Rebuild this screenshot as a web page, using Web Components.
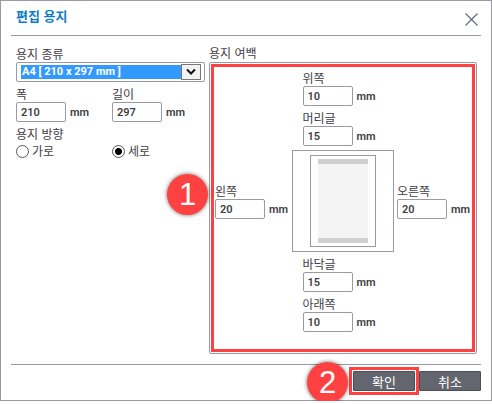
<!DOCTYPE html>
<html lang="ko">
<head>
<meta charset="utf-8">
<title>편집 용지</title>
<style>
  body { margin: 0; background: #fff; color: #404044; font: 12px "Liberation Sans", "Noto Sans CJK KR", sans-serif;
    --line: #9a9aa6; --red: #ff4141; --label: "Noto Sans CJK KR", sans-serif; --value: Roboto, "Liberation Sans", sans-serif; }
</style>
</head>
<body>
<paper-dialog></paper-dialog>
<script>
const define = (name, html, setup) => {
  const template = document.createElement('template');
  template.innerHTML = html;
  customElements.define(name, class extends HTMLElement {
    constructor() {
      super();
      this.attachShadow({ mode: 'open' }).append(template.content.cloneNode(true));
    }
    connectedCallback() { if (setup) setup(this, this.shadowRoot); }
  });
};

define('unit-field', `
<style>
  :host { display: block; }
  label { display: block; height: 20px; line-height: 24px; font-family: var(--label); white-space: nowrap; }
  div { display: flex; gap: 4px; height: 20px; font: 600 11px var(--value); }
  input { box-sizing: border-box; width: 50px; height: 20px; margin: 0; padding: 0 4px; border: 1px solid var(--line);
    border-radius: 2px; background: #fff; color: #404044; font: inherit; outline: 0; }
  span { line-height: 22px; color: #404044; }
</style>
<label for="value"></label>
<div><input id="value" type="text"><span>mm</span></div>`,
(host, root) => {
  root.querySelector('label').textContent = host.getAttribute('label');
  root.querySelector('input').value = host.getAttribute('value');
});

define('paper-select', `
<style>
  :host { display: block; }
  label { display: block; height: 20px; line-height: 24px; font-family: var(--label); }
  div { position: relative; }
  select { display: block; appearance: none; box-sizing: border-box; width: 100%; height: 20px; margin: 0; padding: 2px 23px 2px 4px;
    border: 1px solid var(--line); border-radius: 2px; background: #3399ff content-box; color: #fff;
    font: bold 11px/14px var(--value); text-indent: 1px; outline: 0; }
  svg { position: absolute; right: 4px; top: 2px; pointer-events: none; }
</style>
<label for="kind">용지 종류</label>
<div>
  <select id="kind"><option>A4 [ 210 x 297 mm ]</option></select>
  <svg width="20" height="16"><rect x=".5" y=".5" width="19" height="15" fill="#f2f2f2" stroke="#777"/><path d="M6 5.5l4 4 4-4" fill="none" stroke="#111" stroke-width="2"/></svg>
</div>`);

define('direction-choice', `
<style>
  :host { display: block; }
  fieldset { margin: 0; padding: 0; border: 0; min-width: 0; font-family: var(--label); }
  legend { padding: 0; height: 20px; line-height: 24px; }
  div { display: grid; grid-template-columns: 96px 1fr; height: 18px; align-items: center; }
  label { display: flex; align-items: center; gap: 3px; line-height: 18px; }
  input { appearance: none; box-sizing: border-box; width: 13px; height: 13px; margin: 0; border: 1px solid #555; border-radius: 50%; background: #fff; }
  input:checked { background: radial-gradient(circle, #000 3px, #fff 4px); }
</style>
<fieldset>
  <legend>용지 방향</legend>
  <div>
    <label><input type="radio" name="direction">가로</label>
    <label><input type="radio" name="direction" checked>세로</label>
  </div>
</fieldset>`);

define('step-badge', `
<style>
  :host { display: flex; align-items: center; justify-content: center; box-sizing: border-box; width: 41px; height: 41px; border-radius: 50%;
    background: var(--red); color: #fff; font: 31px/41px "Liberation Sans", sans-serif; box-shadow: 0 0 4px rgba(0,0,0,.6); }
</style>
<slot></slot>`);

define('page-preview', `
<style>
  :host { display: grid; place-items: center; box-sizing: border-box; width: 102px; height: 102px; border: 1px solid var(--line); background: #fff; }
  .sheet { box-sizing: border-box; width: 66px; height: 92px; padding: 3px 7px; border: 1px solid var(--line); display: grid; }
  .area { border: solid #d0d0d0; border-width: 5px 0; background: #f4f4f4; }
</style>
<div class="sheet"><div class="area"></div></div>`);

define('margin-panel', `
<style>
  :host { display: block; }
  h2 { margin: 0; height: 20px; font: 12px/22px var(--label); }
  .panel { position: relative; box-sizing: border-box; padding: 3px 6px 21px 5px; border: 1px solid var(--line); border-radius: 2px;
    display: grid; grid-template-columns: auto auto auto; justify-content: space-between; align-items: center; }
  .group { grid-column: 2; padding-left: 11px; }
  page-preview { margin-top: 4px; }
  .frame { position: absolute; inset: 1px; border: 3px solid var(--red); pointer-events: none; }
  step-badge { position: absolute; left: -43px; top: 111px; }
</style>
<h2>용지 여백</h2>
<div class="panel">
  <div class="group"><unit-field label="위쪽" value="10"></unit-field><unit-field label="머리글" value="15"></unit-field></div>
  <unit-field label="왼쪽" value="20" style="grid-column:1"></unit-field>
  <page-preview></page-preview>
  <unit-field label="오른쪽" value="20"></unit-field>
  <div class="group"><unit-field label="바닥글" value="15"></unit-field><unit-field label="아래쪽" value="10"></unit-field></div>
  <div class="frame"></div>
  <step-badge>1</step-badge>
</div>`);

define('dialog-button', `
<style>
  :host { display: block; position: relative; }
  button { display: block; box-sizing: border-box; width: 62px; height: 20px; margin: 0; padding: 1px 0 0; border: 1px solid #4c4e56; border-radius: 1px;
    background: #63666e; color: #fff; font: 13px/18px var(--label); }
  .frame { display: none; position: absolute; inset: -4px; border: 3px solid var(--red); pointer-events: none; }
  :host([marked]) .frame { display: block; }
  ::slotted(step-badge) { position: absolute; left: -46px; top: -9px; }
</style>
<button type="button"></button><div class="frame"></div><slot></slot>`,
(host, root) => { root.querySelector('button').textContent = host.getAttribute('label'); });

define('paper-dialog', `
<style>
  :host { display: block; border: 1px solid var(--line); background: #fff; }
  header { display: flex; align-items: center; justify-content: space-between; height: 34px; margin: 0 10px; padding: 0 3px 0 5px; border-bottom: 1px solid var(--line); }
  h1 { margin: 0; padding-bottom: 4px; font: bold 13px/20px var(--label); color: #0f7cc4; }
  .close { display: block; width: 13px; height: 13px; margin-top: 3px; padding: 0; border: 0; background: none; }
  svg { display: block; }
  main { display: grid; grid-template-columns: 189px 1fr; gap: 4px; padding: 6px 14px 10px 15px; }
  .size { display: grid; grid-template-columns: 96px 1fr; }
  footer { display: flex; justify-content: flex-end; gap: 4px; margin: 0 10px; padding: 6px 0 9px; border-top: 1px solid var(--line); }
</style>
<header>
  <h1>편집 용지</h1>
  <button class="close" type="button" aria-label="닫기"><svg width="13" height="13"><path d="M.5.5l12 12M12.5.5l-12 12" stroke="#666a76" stroke-width="1.2"/></svg></button>
</header>
<main>
  <section>
    <paper-select></paper-select>
    <div class="size"><unit-field label="폭" value="210"></unit-field><unit-field label="길이" value="297"></unit-field></div>
    <direction-choice></direction-choice>
  </section>
  <margin-panel></margin-panel>
</main>
<footer>
  <dialog-button label="확인" marked><step-badge>2</step-badge></dialog-button>
  <dialog-button label="취소"></dialog-button>
</footer>`);
</script>
</body>
</html>
